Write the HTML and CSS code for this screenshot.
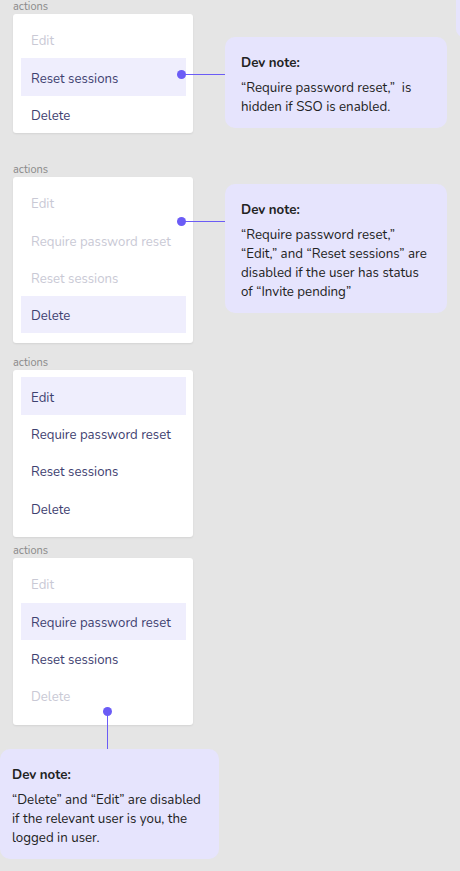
FILE: index.html
```html
<!DOCTYPE html>
<html lang="en">
<head>
    <meta charset="UTF-8">
    <meta name="viewport" content="width=device-width, initial-scale=1.0">
    <title>Actions menu states</title>
    <link rel="stylesheet" href="styles.css">
</head>
<body>
    <div class="edge-note"></div>

    <div class="page">
        <div class="group">
            <div class="stack">
                <div class="label">actions</div>
                <div class="menu menu-short">
                    <div class="item disabled">Edit</div>
                    <div class="item active">Reset sessions</div>
                    <div class="item">Delete</div>
                </div>
            </div>
            <div class="note note-side note-first">
                <span class="connector"></span>
                <div class="note-title">Dev note:</div>
                <p>“Require password reset,”&nbsp; is<br>hidden if SSO is enabled.</p>
            </div>
        </div>

        <div class="group group-second">
            <div class="stack">
                <div class="label">actions</div>
                <div class="menu">
                    <div class="item disabled">Edit</div>
                    <div class="item disabled">Require password reset</div>
                    <div class="item disabled">Reset sessions</div>
                    <div class="item active">Delete</div>
                </div>
            </div>
            <div class="note note-side note-second">
                <span class="connector"></span>
                <div class="note-title">Dev note:</div>
                <p>“Require password reset,”<br>“Edit,” and “Reset sessions” are<br>disabled if the user has status<br>of “Invite pending”</p>
            </div>
        </div>

        <div class="group group-third">
            <div class="stack">
                <div class="label">actions</div>
                <div class="menu">
                    <div class="item active">Edit</div>
                    <div class="item">Require password reset</div>
                    <div class="item">Reset sessions</div>
                    <div class="item">Delete</div>
                </div>
            </div>
        </div>

        <div class="group group-fourth">
            <div class="stack">
                <div class="label">actions</div>
                <div class="menu">
                    <div class="item disabled">Edit</div>
                    <div class="item active">Require password reset</div>
                    <div class="item">Reset sessions</div>
                    <div class="item disabled">Delete</div>
                </div>
            </div>
        </div>

        <div class="note note-below">
            <span class="connector connector-up"></span>
            <div class="note-title">Dev note:</div>
            <p>“Delete” and “Edit” are disabled<br>if the relevant user is you, the<br>logged in user.</p>
        </div>
    </div>
</body>
</html>
```

FILE: styles.css
```css
body {
    margin: 0;
    height: 871px;
    overflow: hidden;
    background: #e5e5e5;
    font-family: 'Nunito', 'Lato', 'Open Sans', sans-serif;
    position: relative;
}

.page {
    padding-left: 13px;
}

.edge-note {
    position: absolute;
    top: 0;
    left: 456px;
    width: 20px;
    height: 37px;
    background: #e6e4fd;
    border-bottom-left-radius: 8px;
}

.group {
    display: flex;
    align-items: flex-start;
}

.group-second {
    margin-top: 30px;
}

.group-third {
    margin-top: 13px;
}

.group-fourth {
    margin-top: 7.5px;
}

.stack {
    width: 180px;
}

.label {
    height: 14px;
    line-height: 13px;
    font-size: 11px;
    color: #8a8a8a;
}

.menu {
    background: #fff;
    border-radius: 3px;
    padding: 7px 7px 10px 8px;
    box-shadow: 0 1px 2px rgba(0, 0, 0, 0.08);
}

.menu-short {
    padding-bottom: 0;
}

.item {
    display: flex;
    align-items: center;
    box-sizing: border-box;
    height: 37.35px;
    padding: 3px 0 0 10px;
    font-size: 13.2px;
    color: #3e4170;
    white-space: nowrap;
}

.item.disabled {
    color: #c9c9d5;
}

.item.active {
    background: #efeefd;
}

.note {
    position: relative;
    width: 222px;
    box-sizing: border-box;
    background: #e6e4fd;
    border-radius: 10px;
    padding: 17px 16px 11px;
    color: #222;
    font-size: 13.3px;
    line-height: 19px;
}

.note-title {
    font-weight: bold;
    margin-bottom: 6px;
}

.note p {
    margin: 0;
}

.note-side {
    margin-left: 32px;
}

.note-first {
    margin-top: 37px;
}

.note-second {
    margin-top: 21px;
}

.note-below {
    margin-left: -13px;
    margin-top: 24.5px;
    width: 219px;
    padding: 17px 12px 11px;
}

.connector {
    position: absolute;
    top: 37px;
    left: -44px;
    width: 44px;
    height: 1px;
    background: #6b5cf6;
}

.connector::before {
    content: '';
    position: absolute;
    left: -4px;
    top: -4px;
    width: 9px;
    height: 9px;
    border-radius: 50%;
    background: #6b5cf6;
}

.connector-up {
    top: -38px;
    left: 107px;
    width: 1px;
    height: 38px;
}

.connector-up::before {
    left: -4px;
    top: -4px;
}
```
